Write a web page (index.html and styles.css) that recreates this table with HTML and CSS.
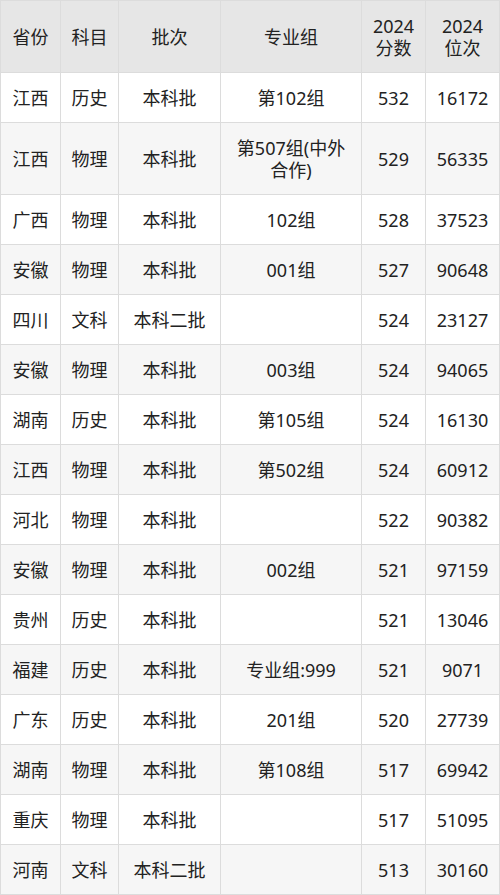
FILE: index.html
```html
<!DOCTYPE html>
<html lang="zh-CN">
<head>
<meta charset="utf-8">
<title>分数线</title>
<link rel="stylesheet" href="styles.css">
</head>
<body>
<table class="score-table">
  <colgroup>
    <col class="c-prov">
    <col class="c-subj">
    <col class="c-batch">
    <col class="c-group">
    <col class="c-score">
    <col class="c-rank">
  </colgroup>
  <thead>
    <tr>
      <th>省份</th><th>科目</th><th>批次</th><th>专业组</th><th>2024<br>分数</th><th>2024<br>位次</th>
    </tr>
  </thead>
  <tbody>
    <tr><td>江西</td><td>历史</td><td>本科批</td><td>第102组</td><td>532</td><td>16172</td></tr>
    <tr><td>江西</td><td>物理</td><td>本科批</td><td>第507组(中外<br>合作)</td><td>529</td><td>56335</td></tr>
    <tr><td>广西</td><td>物理</td><td>本科批</td><td>102组</td><td>528</td><td>37523</td></tr>
    <tr><td>安徽</td><td>物理</td><td>本科批</td><td>001组</td><td>527</td><td>90648</td></tr>
    <tr><td>四川</td><td>文科</td><td>本科二批</td><td></td><td>524</td><td>23127</td></tr>
    <tr><td>安徽</td><td>物理</td><td>本科批</td><td>003组</td><td>524</td><td>94065</td></tr>
    <tr><td>湖南</td><td>历史</td><td>本科批</td><td>第105组</td><td>524</td><td>16130</td></tr>
    <tr><td>江西</td><td>物理</td><td>本科批</td><td>第502组</td><td>524</td><td>60912</td></tr>
    <tr><td>河北</td><td>物理</td><td>本科批</td><td></td><td>522</td><td>90382</td></tr>
    <tr><td>安徽</td><td>物理</td><td>本科批</td><td>002组</td><td>521</td><td>97159</td></tr>
    <tr><td>贵州</td><td>历史</td><td>本科批</td><td></td><td>521</td><td>13046</td></tr>
    <tr><td>福建</td><td>历史</td><td>本科批</td><td>专业组:999</td><td>521</td><td>9071</td></tr>
    <tr><td>广东</td><td>历史</td><td>本科批</td><td>201组</td><td>520</td><td>27739</td></tr>
    <tr><td>湖南</td><td>物理</td><td>本科批</td><td>第108组</td><td>517</td><td>69942</td></tr>
    <tr><td>重庆</td><td>物理</td><td>本科批</td><td></td><td>517</td><td>51095</td></tr>
    <tr><td>河南</td><td>文科</td><td>本科二批</td><td></td><td>513</td><td>30160</td></tr>
  </tbody>
</table>
</body>
</html>
```

FILE: styles.css
```css
html, body {
  margin: 0;
  padding: 0;
  background: #ffffff;
}

.score-table {
  border-collapse: collapse;
  table-layout: fixed;
  width: 499px;
  font-family: "Noto Sans", "Noto Sans CJK SC", sans-serif;
  font-size: 18px;
  line-height: 22px;
  color: #222222;
}

.c-prov { width: 60px; }
.c-subj { width: 58px; }
.c-batch { width: 102px; }
.c-group { width: 141px; }
.c-score { width: 64px; }
.c-rank { width: 74px; }

.score-table th,
.score-table td {
  border: 1px solid #dcdcdc;
  padding: 13.5px 2px;
  text-align: center;
  vertical-align: middle;
  font-weight: normal;
}

.score-table th {
  background: #e6e6e6;
}

.score-table tbody tr:nth-child(even) td {
  background: #f6f6f6;
}
```
